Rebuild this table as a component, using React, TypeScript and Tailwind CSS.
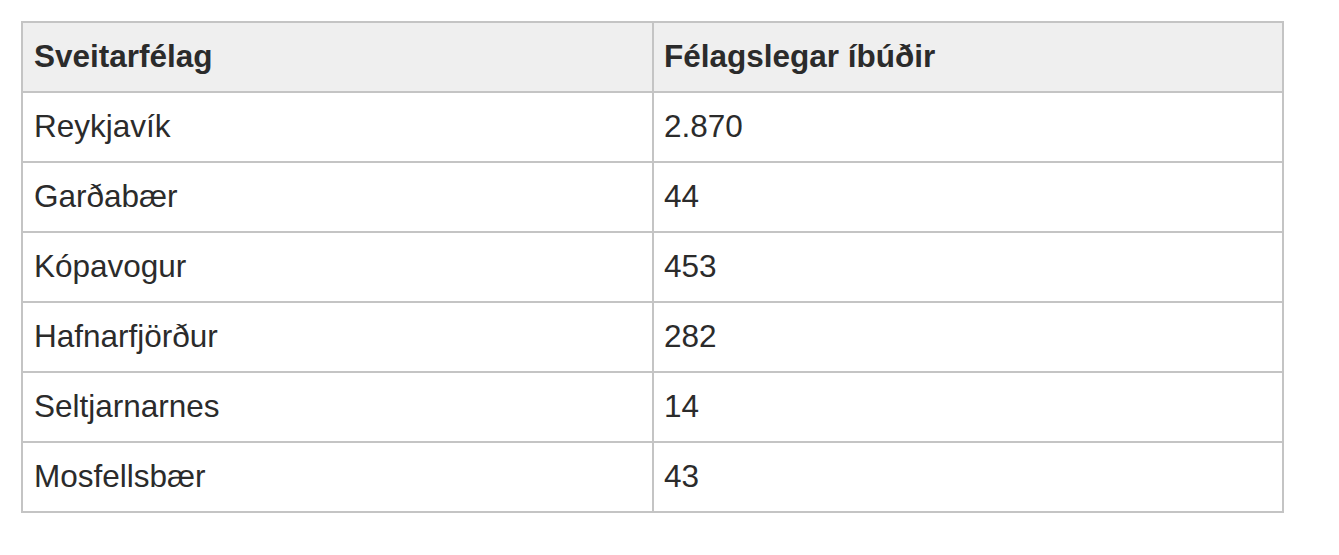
const rows: [string, string][] = [
  ["Reykjavík", "2.870"],
  ["Garðabær", "44"],
  ["Kópavogur", "453"],
  ["Hafnarfjörður", "282"],
  ["Seltjarnarnes", "14"],
  ["Mosfellsbær", "43"],
];

export default function App() {
  return (
    <div
      className="w-[1339px] h-[555px] bg-white pt-[21px] pl-[21px]"
      style={{ fontFamily: '"Liberation Sans", Arial, sans-serif' }}
    >
      <table className="w-[1263px] border-collapse border-2 border-[#c4c4c4] text-[31.5px] text-[#2b2b2b]">
        <thead>
          <tr className="h-[70px] bg-[#efefef]">
            <th className="w-[631px] border-2 border-[#c4c4c4] px-[11px] text-left font-bold">
              Sveitarfélag
            </th>
            <th className="border-2 border-[#c4c4c4] px-[10px] text-left font-bold">
              Félagslegar íbúðir
            </th>
          </tr>
        </thead>
        <tbody>
          {rows.map(([name, count]) => (
            <tr key={name} className="h-[70px]">
              <td className="border-2 border-[#c4c4c4] px-[11px]">{name}</td>
              <td className="border-2 border-[#c4c4c4] px-[10px]">{count}</td>
            </tr>
          ))}
        </tbody>
      </table>
    </div>
  );
}
